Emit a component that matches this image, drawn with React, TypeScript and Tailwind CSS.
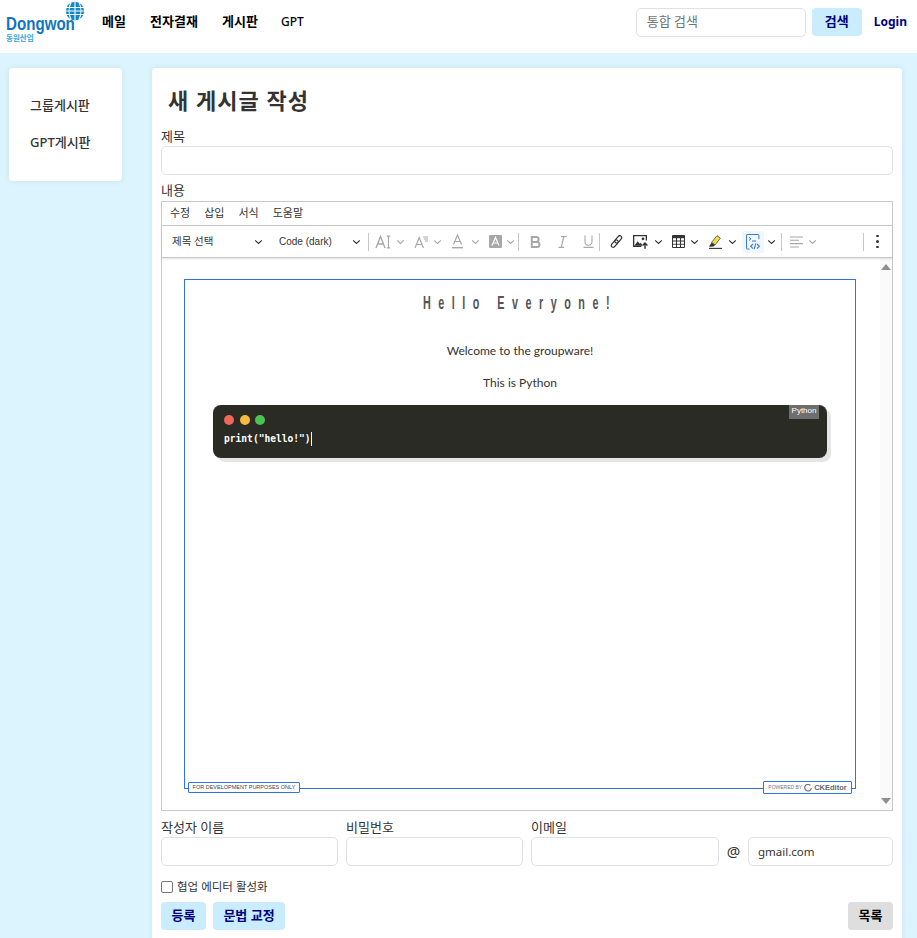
import React from "react";

const sans = "font-['Noto_Sans','Noto_Sans_CJK_KR',sans-serif]";

function Chevron({ dim = false }: { dim?: boolean }) {
  return (
    <svg width="9" height="6" viewBox="0 0 9 6" fill="none" stroke={dim ? "#a8a8a8" : "#333333"} strokeWidth="1.2" className="shrink-0">
      <path d="M1.2 1.4l3.3 3 3.3-3" />
    </svg>
  );
}

function Sep({ className = "" }: { className?: string }) {
  return <div className={"w-px h-[18px] bg-[#c8c8c8] shrink-0 " + className} />;
}

function Globe() {
  return (
    <svg width="20" height="20" viewBox="0 0 20 20" className="absolute left-[65px] top-[1px]">
      <circle cx="10" cy="10" r="9.2" fill="#1487c9" />
      <g stroke="#fff" strokeWidth="1.1" fill="none">
        <path d="M1 6.5h18M0.6 10h18.8M1 13.5h18" />
        <path d="M10 0.8v18.4M6 1.5c-2.5 5-2.5 12 0 17M14 1.5c2.5 5 2.5 12 0 17" />
      </g>
    </svg>
  );
}

function FontSizeIcon() {
  return (
    <svg width="17" height="14" viewBox="0 0 17 14" fill="none" stroke="#a8a8a8" strokeWidth="1.4">
      <path d="M1 13L5.5 1.5 10 13M2.6 9h5.8" />
      <path d="M13.5 1.5v11M11.8 1.2h3.4M11.8 12.8h3.4" strokeWidth="1.2" />
    </svg>
  );
}
function FontFamilyIcon() {
  return (
    <svg width="15" height="14" viewBox="0 0 15 14" fill="none" stroke="#a8a8a8" strokeWidth="1.2">
      <path d="M1 13L5.2 2.5 9.4 13M2.5 9.5h5.4" />
      <path d="M9 2h5M10 4h4M11 6h3" strokeWidth="1" />
    </svg>
  );
}
function FontColorIcon() {
  return (
    <svg width="11" height="15" viewBox="0 0 11 15" fill="none" stroke="#a8a8a8" strokeWidth="1.2">
      <path d="M1.5 10.5L5.5 1 9.5 10.5M2.8 7.5h5.4" />
      <path d="M0 13.7h11" strokeWidth="1.4" />
    </svg>
  );
}
function FontBgIcon() {
  return (
    <svg width="13" height="13" viewBox="0 0 13 13">
      <rect width="13" height="13" rx="1" fill="#a8a8a8" />
      <path d="M3 10.5L6.5 2.5 10 10.5M4.2 8h4.6" fill="none" stroke="#fff" strokeWidth="1.2" />
    </svg>
  );
}
function BoldIcon() {
  return (
    <svg width="11" height="12" viewBox="0 0 11 12" fill="none" stroke="#a8a8a8" strokeWidth="2">
      <path d="M1.8 1h4.4a2.4 2.4 0 010 4.9H1.8zM1.8 5.9h5.2a2.5 2.5 0 010 5.1H1.8z" />
    </svg>
  );
}
function ItalicIcon() {
  return (
    <svg width="9" height="12" viewBox="0 0 9 12" fill="none" stroke="#a8a8a8" strokeWidth="1.2">
      <path d="M3 0.6h5.5M0.5 11.4H6M5.8 0.6L3.2 11.4" />
    </svg>
  );
}
function UnderlineIcon() {
  return (
    <svg width="11" height="13" viewBox="0 0 11 13" fill="none" stroke="#a8a8a8" strokeWidth="1.1">
      <path d="M2 0.5v6.2a3.5 3.5 0 007 0V0.5M0.5 12.4h10" />
    </svg>
  );
}
function LinkIcon() {
  return (
    <svg width="13" height="13" viewBox="0 0 13 13" fill="none" stroke="#333" strokeWidth="1.2">
      <g transform="rotate(-50 6.5 6.5)">
        <rect x="-0.5" y="4.6" width="8.5" height="3.8" rx="1.9" />
        <rect x="5" y="4.6" width="8.5" height="3.8" rx="1.9" />
      </g>
    </svg>
  );
}
function ImageIcon() {
  return (
    <svg width="16" height="14" viewBox="0 0 16 14">
      <path d="M0 0h14v5.5h-1.3V1.3H1.3v9.4h7V12H0z" fill="#333" />
      <path d="M1.3 10.8l3.4-4.6 2 2.5 1.2-1 1.6 3.1z" fill="#333" />
      <circle cx="10" cy="3.8" r="1.4" fill="#333" />
      <path d="M12 13.8V8.5M9.6 10.5L12 8l2.4 2.5" fill="none" stroke="#333" strokeWidth="1.4" />
    </svg>
  );
}
function TableIcon() {
  return (
    <svg width="13" height="13" viewBox="0 0 13 13">
      <rect x="0" y="0" width="13" height="13" rx="1" fill="#333" />
      <g fill="#fff">
        <rect x="1" y="3.2" width="3" height="2.3" />
        <rect x="5" y="3.2" width="3" height="2.3" />
        <rect x="9" y="3.2" width="3" height="2.3" />
        <rect x="1" y="6.5" width="3" height="2.3" />
        <rect x="5" y="6.5" width="3" height="2.3" />
        <rect x="9" y="6.5" width="3" height="2.3" />
        <rect x="1" y="9.7" width="3" height="2.3" />
        <rect x="5" y="9.7" width="3" height="2.3" />
        <rect x="9" y="9.7" width="3" height="2.3" />
      </g>
    </svg>
  );
}
function HighlightIcon() {
  return (
    <svg width="14" height="14" viewBox="0 0 14 14">
      <path d="M9 0.6l3.4 2.6L7 10 3.6 7.4z" fill="#f2dc4a" stroke="#333" strokeWidth="0.7" />
      <path d="M3.6 7.4L7 10l-1.5 1.5-4.5.3z" fill="#333" />
      <path d="M1 13.4h13" stroke="#333" strokeWidth="1.1" />
    </svg>
  );
}
function CodeBlockIcon() {
  return (
    <svg width="15" height="16" viewBox="0 0 15 16" fill="none" stroke="#3b78d8" strokeWidth="1">
      <path d="M3.5 15H1.2a.7.7 0 01-.7-.7V1.2A.7.7 0 011.2.5h11a.7.7 0 01.7.7v4" />
      <path d="M3 3.2l2 1.6-2 1.6M6 7h4" />
      <path d="M7 10l-2.4 2.3L7 14.5M11 10l2.4 2.3L11 14.5M9.8 9.5l-1.6 5.6" strokeWidth="1.1" />
    </svg>
  );
}
function AlignIcon() {
  return (
    <svg width="13" height="12" viewBox="0 0 13 12" stroke="#a8a8a8" strokeWidth="1.1">
      <path d="M0 1h13M0 4.3h9M0 7.6h13M0 11h9" />
    </svg>
  );
}
function CkLogo() {
  return (
    <svg width="8" height="8" viewBox="0 0 8 8" fill="none" stroke="#777" strokeWidth="1.2" className="mx-[2px]">
      <path d="M6.4 1.4A3.3 3.3 0 107.3 4" />
    </svg>
  );
}

function Field({ label, w, mr = "" }: { label: string; w: string; mr?: string }) {
  return (
    <div className={"flex flex-col " + w + " " + mr}>
      <label className="text-[13px] leading-[16px] text-[#333333]">{label}</label>
      <div className="mt-[2px] h-[29px] border border-[#dee2e6] rounded-[5px] bg-white" />
    </div>
  );
}

export default function App() {
  return (
    <div className={"h-[938px] overflow-hidden bg-[#dcf4fe] " + sans}>
      <header className="h-[53px] bg-white flex items-center">
        <div className="relative w-[90px] h-[53px] shrink-0">
          <Globe />
          <span className="absolute left-[6px] top-[15px] origin-left scale-x-[0.84] font-['Liberation_Sans',sans-serif] font-bold text-[18px] leading-[18px] text-[#1176bd]">Dongwon</span>
          <span className="absolute left-[6px] top-[33px] text-[7.5px] leading-[10px] font-bold text-[#35a4dc]">동원산업</span>
        </div>
        <nav className="flex items-center ml-[12px] text-[13px] font-bold text-black -mt-[9px]">
          <span className="w-[48px]">메일</span>
          <span className="w-[72px]">전자결재</span>
          <span className="w-[59px]">게시판</span>
          <span className="text-[12px] font-medium">GPT</span>
        </nav>
        <div className="ml-auto flex items-center -mt-[9px]">
          <div className="w-[170px] h-[29px] border border-[#dee2e6] rounded-[5px] flex items-center px-[10px] text-[13px] text-[#6c757d]">통합 검색</div>
          <button className="ml-[6px] w-[50px] h-[28px] rounded-[4px] bg-[#c9edff] text-[#000080] text-[13px] font-bold">검색</button>
          <span className="ml-[12px] mr-[10px] text-[12px] font-bold text-[#000080]">Login</span>
        </div>
      </header>

      <div className="flex items-start pt-[15px]">
        <aside className="ml-[9px] w-[113px] h-[113px] bg-white rounded-[4px] shadow-[0_0_6px_rgba(0,0,0,0.08)] pt-[28px] pl-[21px] text-[13px] font-medium text-[#333333]">
          <div className="h-[18px] leading-[18px]">그룹게시판</div>
          <div className="h-[18px] leading-[18px] mt-[19px]">GPT게시판</div>
        </aside>

        <main className="ml-[30px] w-[750px] h-[900px] bg-white rounded-[4px] shadow-[0_0_6px_rgba(0,0,0,0.08)] px-[9px]">
          <h1 className="mt-[17px] ml-[7px] text-[22px] leading-[30px] font-bold text-[#333333] tracking-[1px]">새 게시글 작성</h1>
          <label className="block mt-[13px] text-[13px] leading-[16px] text-[#333333]">제목</label>
          <div className="mt-[2px] h-[29px] w-[732px] border border-[#dee2e6] rounded-[5px]" />
          <label className="block mt-[7px] text-[13px] leading-[16px] text-[#333333]">내용</label>

          <div className="mt-[3px] w-[732px] h-[610px] border border-[#c8c8c8] flex flex-col">
            <div className="h-[24px] border-b border-[#c8c8c8] flex items-center pl-[8px] gap-[14px] text-[11px] text-[#333333] shrink-0">
              <span>수정</span><span>삽입</span><span>서식</span><span>도움말</span>
            </div>
            <div className="h-[32px] flex items-center shrink-0 border-b border-[#c8c8c8] shadow-[0_1px_2px_rgba(0,0,0,0.12)] relative z-10">
              <div className="w-[92px] pl-[10px] text-[10.5px] text-[#333333] shrink-0">제목 선택</div>
              <Chevron />
              <div className="w-[20px] shrink-0" />
              <div className="w-[75px] font-['Liberation_Sans',sans-serif] text-[10px] text-[#333333] shrink-0 -ml-[4px]">Code (dark)</div>
              <div className="-ml-[2px]"><Chevron /></div>
              <Sep className="ml-[7px]" />
              <div className="ml-[6px]"><FontSizeIcon /></div>
              <div className="ml-[4px]"><Chevron dim /></div>
              <div className="ml-[9px]"><FontFamilyIcon /></div>
              <div className="ml-[4px]"><Chevron dim /></div>
              <div className="ml-[10px]"><FontColorIcon /></div>
              <div className="ml-[8px]"><Chevron dim /></div>
              <div className="ml-[9px]"><FontBgIcon /></div>
              <div className="ml-[4px]"><Chevron dim /></div>
              <Sep className="ml-[3px]" />
              <div className="ml-[11px]"><BoldIcon /></div>
              <div className="ml-[17px]"><ItalicIcon /></div>
              <div className="ml-[16px]"><UnderlineIcon /></div>
              <Sep className="ml-[5px]" />
              <div className="ml-[10px]"><LinkIcon /></div>
              <div className="ml-[10px]"><ImageIcon /></div>
              <div className="ml-[5px]"><Chevron /></div>
              <div className="ml-[9px]"><TableIcon /></div>
              <div className="ml-[5px]"><Chevron /></div>
              <div className="ml-[9px]"><HighlightIcon /></div>
              <div className="ml-[6px]"><Chevron /></div>
              <div className="ml-[5px] w-[22px] h-[22px] bg-[#f0f7ff] rounded-[2px] flex items-center justify-center"><CodeBlockIcon /></div>
              <div className="ml-[3px]"><Chevron /></div>
              <Sep className="ml-[5px]" />
              <div className="ml-[8px]"><AlignIcon /></div>
              <div className="ml-[5px]"><Chevron dim /></div>
              <Sep className="ml-[46px]" />
              <div className="ml-[12px] flex flex-col gap-[3px]">
                <span className="w-[2.5px] h-[2.5px] rounded-full bg-[#333333]" />
                <span className="w-[2.5px] h-[2.5px] rounded-full bg-[#333333]" />
                <span className="w-[2.5px] h-[2.5px] rounded-full bg-[#333333]" />
              </div>
            </div>

            <div className="flex-1 flex min-h-0">
              <div className="flex-1 pl-[22px] pt-[21px]">
                <div className="relative w-[672px] h-[510px] border border-[#2f74e0] bg-white">
                  <h2 className="mt-[13px] text-center font-['Liberation_Sans',sans-serif] font-bold text-[18px] leading-[20px] tracking-[12.5px] text-[#555555] scale-x-[0.6]">Hello Everyone!</h2>
                  <p className="mt-[30px] text-center font-['Lato',sans-serif] text-[12px] leading-[16px] text-[#333333]">Welcome to the groupware!</p>
                  <p className="mt-[16px] text-center font-['Lato',sans-serif] text-[12px] leading-[16px] text-[#333333]">This is Python</p>
                  <div className="relative mt-[14px] ml-[28px] w-[614px] h-[53px] bg-[#2a2b24] rounded-[8px] shadow-[4px_4px_0_rgba(0,0,0,0.1)] pt-[10px] pl-[11px]">
                    <div className="flex gap-[5.5px]">
                      <span className="w-[10px] h-[10px] rounded-full bg-[#f2665a]" />
                      <span className="w-[10px] h-[10px] rounded-full bg-[#f7b93e]" />
                      <span className="w-[10px] h-[10px] rounded-full bg-[#4cc24f]" />
                    </div>
                    <div className="mt-[7px] font-['DejaVu_Sans_Mono',monospace] text-[9.6px] leading-[14px] font-bold text-white flex items-center">
                      print("hello!")<span className="w-px h-[14px] bg-white" />
                    </div>
                    <span className="absolute right-[8px] top-0 w-[30px] h-[14px] bg-[#6e6e6e] text-[8px] leading-[12px] text-center text-white font-['Liberation_Sans',sans-serif]">Python</span>
                  </div>

                  <div className="absolute left-[3px] bottom-[-5px] h-[11px] w-[112px] bg-white border border-[#2f74e0] rounded-[1px] font-['Liberation_Sans',sans-serif] text-[5.5px] leading-[9px] text-center text-[#444444]">FOR DEVELOPMENT PURPOSES ONLY</div>
                  <div className="absolute right-[3px] bottom-[-6px] h-[13px] w-[89px] bg-white border border-[#2f74e0] rounded-[1px] flex items-center justify-center font-['Liberation_Sans',sans-serif] text-[#777777]">
                    <span className="text-[5px]">POWERED BY</span><CkLogo /><span className="text-[7.5px] font-bold text-[#666666]">CKEditor</span>
                  </div>
                </div>
              </div>
              <div className="w-[12px] mr-0 bg-[#fafafa] flex flex-col items-center justify-between pt-[6px] pb-[6px] shrink-0">
                <svg width="10" height="6" viewBox="0 0 10 6"><path d="M5 0l5 6H0z" fill="#8f8f8f" /></svg>
                <svg width="10" height="6" viewBox="0 0 10 6"><path d="M0 0h10L5 6z" fill="#8f8f8f" /></svg>
              </div>
            </div>
          </div>

          <div className="flex w-[732px] mt-[8px] items-end">
            <Field label="작성자 이름" w="w-[177px]" mr="mr-[8px]" />
            <Field label="비밀번호" w="w-[177px]" mr="mr-[8px]" />
            <Field label="이메일" w="w-[188px]" />
            <span className="w-[29px] h-[29px] flex items-center justify-center text-[15px] text-[#333333] shrink-0">@</span>
            <div className="w-[145px] h-[29px] border border-[#dee2e6] rounded-[5px] flex items-center pl-[9px] text-[11.5px] text-[#333333] shrink-0">gmail.com</div>
          </div>

          <label className="flex items-center mt-[13px] h-[16px] text-[11.5px] text-[#333333]">
            <span className="w-[12px] h-[12px] border border-[#767676] rounded-[2px] mr-[4px] bg-white" />
            협업 에디터 활성화
          </label>

          <div className="flex w-[732px] mt-[7px]">
            <button className="w-[45px] h-[28px] rounded-[4px] bg-[#c9edff] text-[13px] font-bold text-[#000080]">등록</button>
            <button className="ml-[7px] w-[72px] h-[28px] rounded-[4px] bg-[#c9edff] text-[13px] font-bold text-[#000080]">문법 교정</button>
            <button className="ml-auto w-[45px] h-[28px] rounded-[4px] bg-[#dedede] text-[13px] font-bold text-black">목록</button>
          </div>
        </main>
      </div>
    </div>
  );
}
